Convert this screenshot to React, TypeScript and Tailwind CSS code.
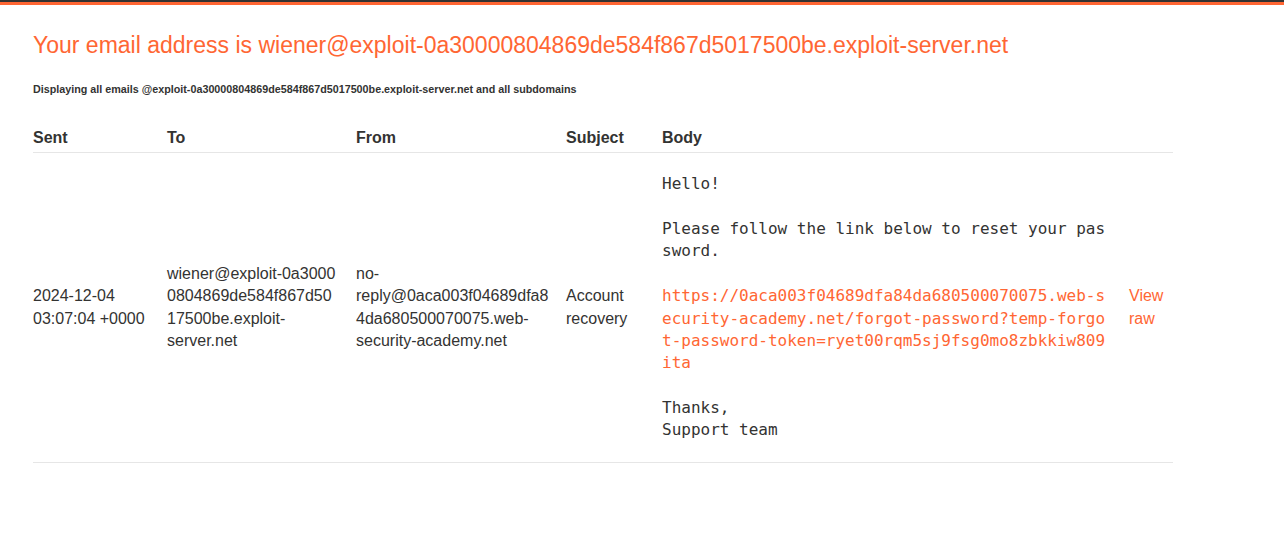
const ORANGE = 'text-[#ff6633]';

const EMAIL = 'wiener@exploit-0a30000804869de584f867d5017500be.exploit-server.net';
// word joiner keeps "exploit-0a3000" together so the cell wraps like the original table
const EMAIL_CELL = 'wiener@exploit-\u20600a30000804869de584f867d5017500be.exploit-server.net';
const LINK =
  'https://0aca003f04689dfa84da680500070075.web-security-academy.net/forgot-password?temp-forgot-password-token=ryet00rqm5sj9fsg0mo8zbkkiw809ita';

export default function App() {
  return (
    <div className="min-h-[538px] bg-white text-[#333332] font-['Liberation_Sans',Arial,sans-serif]">
      <div className="h-[2px] bg-[#333332]" />
      <div className="h-[3px] bg-[#ff6633]" />
      <div className="px-[33px]">
        <h1 className={`mt-[26px] text-[23px] leading-[1.25] font-normal ${ORANGE}`}>
          Your email address is {EMAIL}
        </h1>
        <h4 className="mt-[22px] text-[10.75px] leading-[1.4] font-bold">
          Displaying all emails @exploit-0a30000804869de584f867d5017500be.exploit-server.net and all subdomains
        </h4>

        <div className="mt-[30px] w-[1140px] text-[16px] leading-[1.4]">
          <div className="grid grid-cols-[134px_189px_210px_96px_467px_44px] font-bold border-b border-[#e6e6e6] pb-[3px]">
            <div>Sent</div>
            <div>To</div>
            <div>From</div>
            <div>Subject</div>
            <div>Body</div>
            <div />
          </div>
          <div className="grid grid-cols-[134px_189px_210px_96px_467px_44px] items-center border-b border-[#e6e6e6] pt-[20px] pb-[20px]">
            <div className="pr-[20px] break-words">2024-12-04 03:07:04 +0000</div>
            <div className="pr-[18px] break-words">{EMAIL_CELL}</div>
            <div className="pr-[14px] break-words">no-reply@0aca003f04689dfa84da680500070075.web-security-academy.net</div>
            <div className="pr-[20px] break-words">Account recovery</div>
            <pre className="pr-[21px] whitespace-pre-wrap break-all font-['DejaVu_Sans_Mono',monospace] text-[16px] leading-[1.4]">
              {'Hello!\n\nPlease follow the link below to reset your password.\n\n'}
              <a className={ORANGE}>{LINK}</a>
              {'\n\nThanks,\nSupport team'}
            </pre>
            <a className={`${ORANGE} break-words`}>View raw</a>
          </div>
        </div>
      </div>
    </div>
  );
}
